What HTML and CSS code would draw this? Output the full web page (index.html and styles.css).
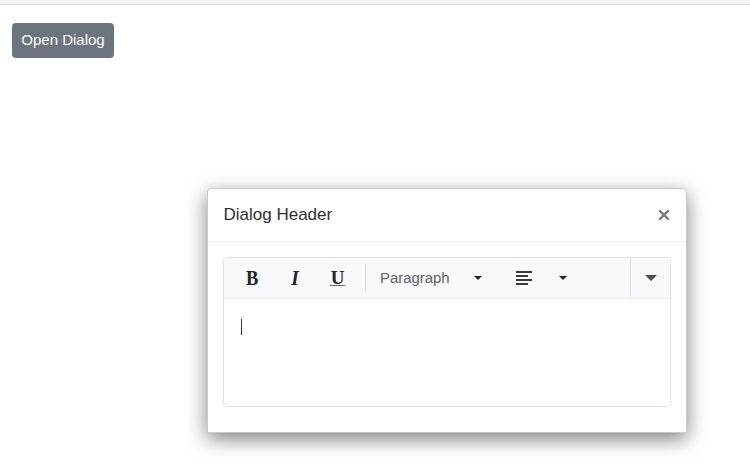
FILE: index.html
```html
<!DOCTYPE html>
<html lang="en">
<head>
<meta charset="utf-8">
<title>Dialog</title>
<link rel="stylesheet" href="styles.css">
</head>
<body>
<div class="topbar"></div>
<main class="page">
  <button class="open-btn">Open Dialog</button>
  <section class="dialog">
    <header class="dialog-header">
      <span>Dialog Header</span>
      <svg class="close" width="12" height="12" viewBox="0 0 12 12"><path d="M1.3 1.3 10.7 10.7M10.7 1.3 1.3 10.7"/></svg>
    </header>
    <div class="dialog-body">
      <div class="editor">
        <div class="toolbar">
          <span class="tool bold">B</span>
          <span class="tool italic">I</span>
          <span class="tool underline">U</span>
          <span class="separator"></span>
          <span class="format">Paragraph</span>
          <svg class="caret" width="8" height="4" viewBox="0 0 8 4"><path d="M0 0h8L4 4z"/></svg>
          <svg class="align" width="16" height="14" viewBox="0 0 16 14"><path d="M0 0h16v2H0zM0 4h12v2H0zM0 8h16v2H0zM0 12h12v2H0z"/></svg>
          <svg class="caret" width="8" height="4" viewBox="0 0 8 4"><path d="M0 0h8L4 4z"/></svg>
          <span class="expand"><svg width="12" height="6" viewBox="0 0 12 6"><path d="M0 0h12L6 6z"/></svg></span>
        </div>
        <div class="content"><span class="cursor"></span></div>
      </div>
    </div>
  </section>
</main>
</body>
</html>
```
FILE: styles.css
```css
* { box-sizing: border-box; }
body { margin: 0; height: 467px; overflow: hidden; background: #fff; color: #212529; font-family: "Liberation Sans", Arial, sans-serif; }
.topbar { height: 5px; background: #f5f5f5; border-bottom: 1px solid #dadada; }
.page { padding: 18px 0 0 12px; }
.open-btn { display: block; width: 102px; height: 35px; padding: 0 0 1px; border: 0; border-radius: 4px; background: #6c757d; color: #fff; font: 15px/34px "Liberation Sans", Arial, sans-serif; }
.dialog { width: 480px; height: 245px; margin: 130px 0 0 195px; background: #fff; border: 1px solid #c8c8c8; border-radius: 4px 4px 1px 1px; box-shadow: 0 6px 20px rgba(0, 0, 0, .5); }
.dialog-header { display: flex; justify-content: space-between; align-items: center; height: 53px; padding: 0 16px 1px 15.5px; border-bottom: 1px solid #e9ecef; font-size: 17px; color: #2c3034; }
.close { fill: none; stroke: #7b7b7b; stroke-width: 2.4; }
.dialog-body { padding: 15px; }
.editor { height: 150px; border: 1px solid #dee2e6; border-radius: 4px; overflow: hidden; }
.toolbar { display: flex; align-items: center; height: 41px; background: #f8f9fa; border-bottom: 1px solid #e9ecef; }
.tool { flex: none; font: bold 20px/20px "Liberation Serif", serif; text-align: center; }
.bold { width: 14px; margin-left: 21px; font-size: 22px; transform: scaleX(.84); }
.italic { width: 12px; margin-left: 30px; font-style: italic; font-size: 22px; transform: scaleX(.88); }
.underline { width: 15px; height: 15px; margin-left: 29px; display: flex; justify-content: center; font-size: 19px; line-height: 14px; border-bottom: 1px solid #6b7075; }
.separator { width: 1px; height: 28px; margin-left: 20px; background: #d5d9dd; }
.format { width: 94px; padding-left: 14px; color: #5c646b; font-size: 14.9px; }
.caret { margin-left: 14px; fill: #212529; }
.align { margin-left: 34px; fill: #343a40; }
.align + .caret { margin-left: 27px; }
.expand { display: flex; align-items: center; justify-content: center; width: 40px; height: 40px; margin-left: auto; border-left: 1px solid #dee2e6; fill: #495057; }
.content { padding: 20px 17px; }
.cursor { display: block; width: 1px; height: 16px; background: #333; }
```
